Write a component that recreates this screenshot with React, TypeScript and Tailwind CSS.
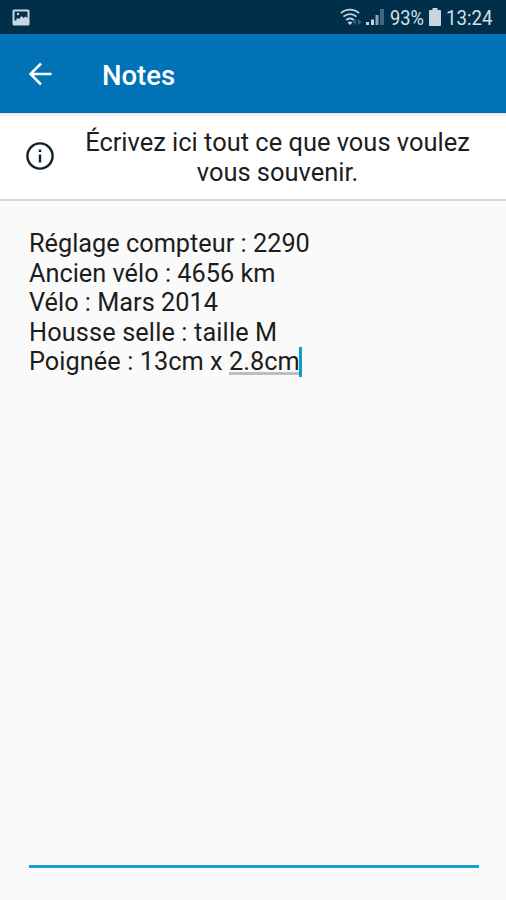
function StatusBar() {
  return (
    <div className="flex h-[34px] items-center bg-[#012e49] pl-3 pr-[13px] text-[#d3e0e8]">
      <svg width="18" height="17" viewBox="0 0 18 17">
        <rect x="0.5" y="0.5" width="17" height="16" rx="1.5" fill="#c5d6e1" />
        <path d="M2.500 2.500h13v6.500l-2-1.500-2 1.500-2-2-2.500 3-2-1-1 2.500H2.500z" fill="#062f49" />
        <circle cx="6" cy="5" r="1.2" fill="#c5d6e1" />
      </svg>
      <svg className="ml-auto" width="45" height="20" viewBox="0 0 45 20" fill="none">
        <g stroke="#c5d6e1" strokeWidth="1.800">
          <path d="M1 6.200c5.200-4.700 12.800-4.700 18 0" />
          <path d="M3.500 9.600c3.700-3.400 9.300-3.400 13 0" />
          <path d="M6.200 13c2.200-2.100 5.400-2.100 7.600 0" />
        </g>
        <path d="M7.500 15.500c1.500-1.400 3.500-1.400 5 0L10 18z" fill="#c5d6e1" />
        <path d="M13 15l3-3v6zM21.500 15l-3.500-3v6z" fill="#3a6580" />
        <path d="M26 15h3v3h-3zM31 12.500h3v5.500h-3z" fill="#c5d6e1" />
        <path d="M35.500 8h3v10h-3z" fill="#8aa5b5" />
        <path d="M40 2h4v16h-4z" fill="#3f6880" />
      </svg>
      <span className="ml-[5px] w-[34px] origin-left scale-x-[.89] whitespace-nowrap pt-px text-[20.500px] leading-[36px]">93%</span>
      <svg className="ml-[5px]" width="12" height="18" viewBox="0 0 12 18" fill="#c8d6dc">
        <path d="M3.500 0h5v2H11q1 0 1 1v14q0 1-1 1H1q-1 0-1-1V3q0-1 1-1h2.500z" />
      </svg>
      <span className="ml-[5px] w-[47px] origin-left scale-x-[.91] whitespace-nowrap pt-px text-[20.500px] leading-[36px]">13:24</span>
    </div>
  );
}

export default function App() {
  return (
    <div className="flex h-[900px] w-[506px] flex-col overflow-hidden bg-[#fafafa] font-[Roboto,sans-serif] text-[#1d1d1d]">
      <StatusBar />
      <header className="flex h-[79px] shrink-0 items-center border-b border-[#0869a8] bg-[#0072b5] pl-[28px] text-white">
        <svg className="mt-px" width="24" height="24" viewBox="0 0 24 24" fill="none" stroke="currentColor" strokeWidth="2.500">
          <path d="M23.500 12H2.500M13 1.500L2.500 12L13 22.500" />
        </svg>
        <h1 className="ml-[50px] pt-[6px] text-[27.500px] font-medium leading-[30px]">Notes</h1>
      </header>
      <section className="flex h-[88px] shrink-0 items-center border-b-2 border-[#d9d9d9] bg-white bg-linear-to-b from-[#e4e8eb] to-white to-[5px] pl-[26px]">
        <svg width="28" height="28" viewBox="0 0 28 28" fill="none" stroke="#10202a" strokeWidth="2.400">
          <circle cx="14" cy="14" r="12.600" />
          <path d="M14 12.500v8M14 7.500v2.600" />
        </svg>
        <p className="ml-[24px] w-[399px] pt-[4px] text-center text-[25.450px] leading-[29.600px]">
          Écrivez ici tout ce que vous voulez<br />vous souvenir.
        </p>
      </section>
      <main className="ml-[29px] mr-[27px] mb-[32px] mt-[28px] flex-1 border-b-[3px] border-[#1c9ed8] text-[25.300px] leading-[29.600px]">
        <p>Réglage compteur : 2290</p>
        <p>Ancien vélo : 4656 km</p>
        <p>Vélo : Mars 2014</p>
        <p className="tracking-[0.130px]">Housse selle : taille M</p>
        <p className="flex whitespace-pre">
          <span className="tracking-[0.060px]">Poignée : 13cm x </span>
          <span className="h-[28px] border-b-[3px] border-[#bdbdbd]">2.8cm</span>
          <span className="-ml-px h-[30px] w-[3px] bg-[#099fce]" />
        </p>
      </main>
    </div>
  );
}
